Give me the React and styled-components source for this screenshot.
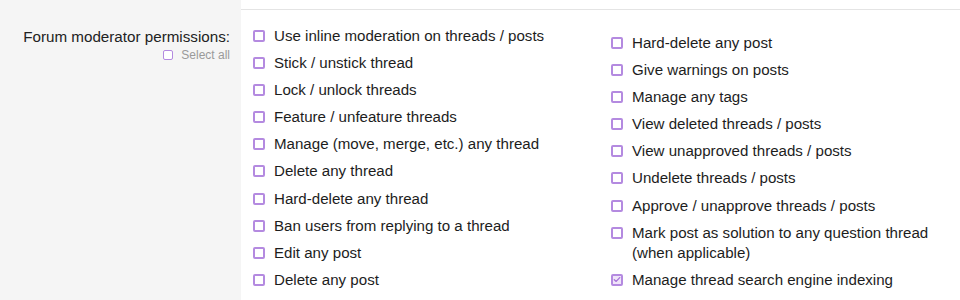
import React from "react";
import styled, { createGlobalStyle } from "styled-components";

const Global = createGlobalStyle`
  html, body { margin: 0; padding: 0; background: #fff; }
  body { font-family: "Liberation Sans", Arial, sans-serif; color: #1d1d1d; }
`;

const Page = styled.div`
  display: flex;
  flex-direction: column;
  width: 960px;
  height: 300px;
  overflow: hidden;
`;

const Row = styled.div`
  display: grid;
  grid-template-columns: 241px 1fr;
  flex: ${(p) => (p.$grow ? "1" : "none")};
`;

const Term = styled.div`
  background: #f5f5f5;
  padding: ${(p) => (p.$empty ? "0" : "17px 11px 0 0")};
  height: ${(p) => (p.$empty ? "10px" : "auto")};
  display: flex;
  flex-direction: column;
  align-items: flex-end;
`;

const Desc = styled.div`
  background: #fff;
  border-bottom: ${(p) => (p.$top ? "1px solid #e4e4e4" : "none")};
  padding: ${(p) => (p.$top ? "0" : "16px 0 0 12px")};
  display: ${(p) => (p.$top ? "block" : "flex")};
  height: ${(p) => (p.$top ? "10px" : "auto")};
  box-sizing: border-box;
`;

const Label = styled.div`
  font-size: 15.2px;
  line-height: 20px;
  color: #222;
`;

const SelectAll = styled.label`
  display: flex;
  align-items: center;
  gap: 8px;
  margin-top: -2px;
  font-size: 12px;
  line-height: 20px;
  color: #9a9a9a;
`;

const Column = styled.ul`
  list-style: none;
  margin: 0;
  padding: ${(p) => (p.$offset ? "7px 0 0 0" : "0")};
  width: 358px;
  display: flex;
  flex-direction: column;
  gap: 7.1px;
`;

const Item = styled.li`
  display: flex;
  align-items: flex-start;
  gap: 9px;
  font-size: 15.1px;
  line-height: 20px;
  color: #1d1d1d;
`;

const Box = styled.span`
  flex: none;
  box-sizing: border-box;
  width: ${(p) => (p.$small ? "10px" : "12px")};
  height: ${(p) => (p.$small ? "10px" : "12px")};
  margin-top: ${(p) => (p.$small ? "0" : "4px")};
  border: ${(p) => (p.$small ? "1.5px" : "2px")} solid #b48ae0;
  border-radius: 2px;
  background: ${(p) => (p.$checked ? "#efe4f9" : "#fff")};
  display: flex;
  align-items: center;
  justify-content: center;
`;

const Check = () => (
  <svg width="9" height="9" viewBox="0 0 10 10">
    <path d="M1.6 5.2 L4 7.4 L8.4 2.6" fill="none" stroke="#a672d8" strokeWidth="1.6" strokeLinecap="round" strokeLinejoin="round" />
  </svg>
);

const col1 = [
  "Use inline moderation on threads / posts",
  "Stick / unstick thread",
  "Lock / unlock threads",
  "Feature / unfeature threads",
  "Manage (move, merge, etc.) any thread",
  "Delete any thread",
  "Hard-delete any thread",
  "Ban users from replying to a thread",
  "Edit any post",
  "Delete any post",
];

const col2 = [
  ["Hard-delete any post"],
  ["Give warnings on posts"],
  ["Manage any tags"],
  ["View deleted threads / posts"],
  ["View unapproved threads / posts"],
  ["Undelete threads / posts"],
  ["Approve / unapprove threads / posts"],
  ["Mark post as solution to any question thread (when applicable)"],
  ["Manage thread search engine indexing", true],
];

export default function App() {
  return (
    <Page>
      <Global />
      <Row>
        <Term $empty />
        <Desc $top />
      </Row>
      <Row $grow>
        <Term>
          <Label>Forum moderator permissions:</Label>
          <SelectAll>
            <Box $small />
            Select all
          </SelectAll>
        </Term>
        <Desc>
          <Column>
            {col1.map((t) => (
              <Item key={t}>
                <Box />
                <span>{t}</span>
              </Item>
            ))}
          </Column>
          <Column $offset>
            {col2.map(([t, c]) => (
              <Item key={t}>
                <Box $checked={c}>{c && <Check />}</Box>
                <span>{t}</span>
              </Item>
            ))}
          </Column>
        </Desc>
      </Row>
    </Page>
  );
}
